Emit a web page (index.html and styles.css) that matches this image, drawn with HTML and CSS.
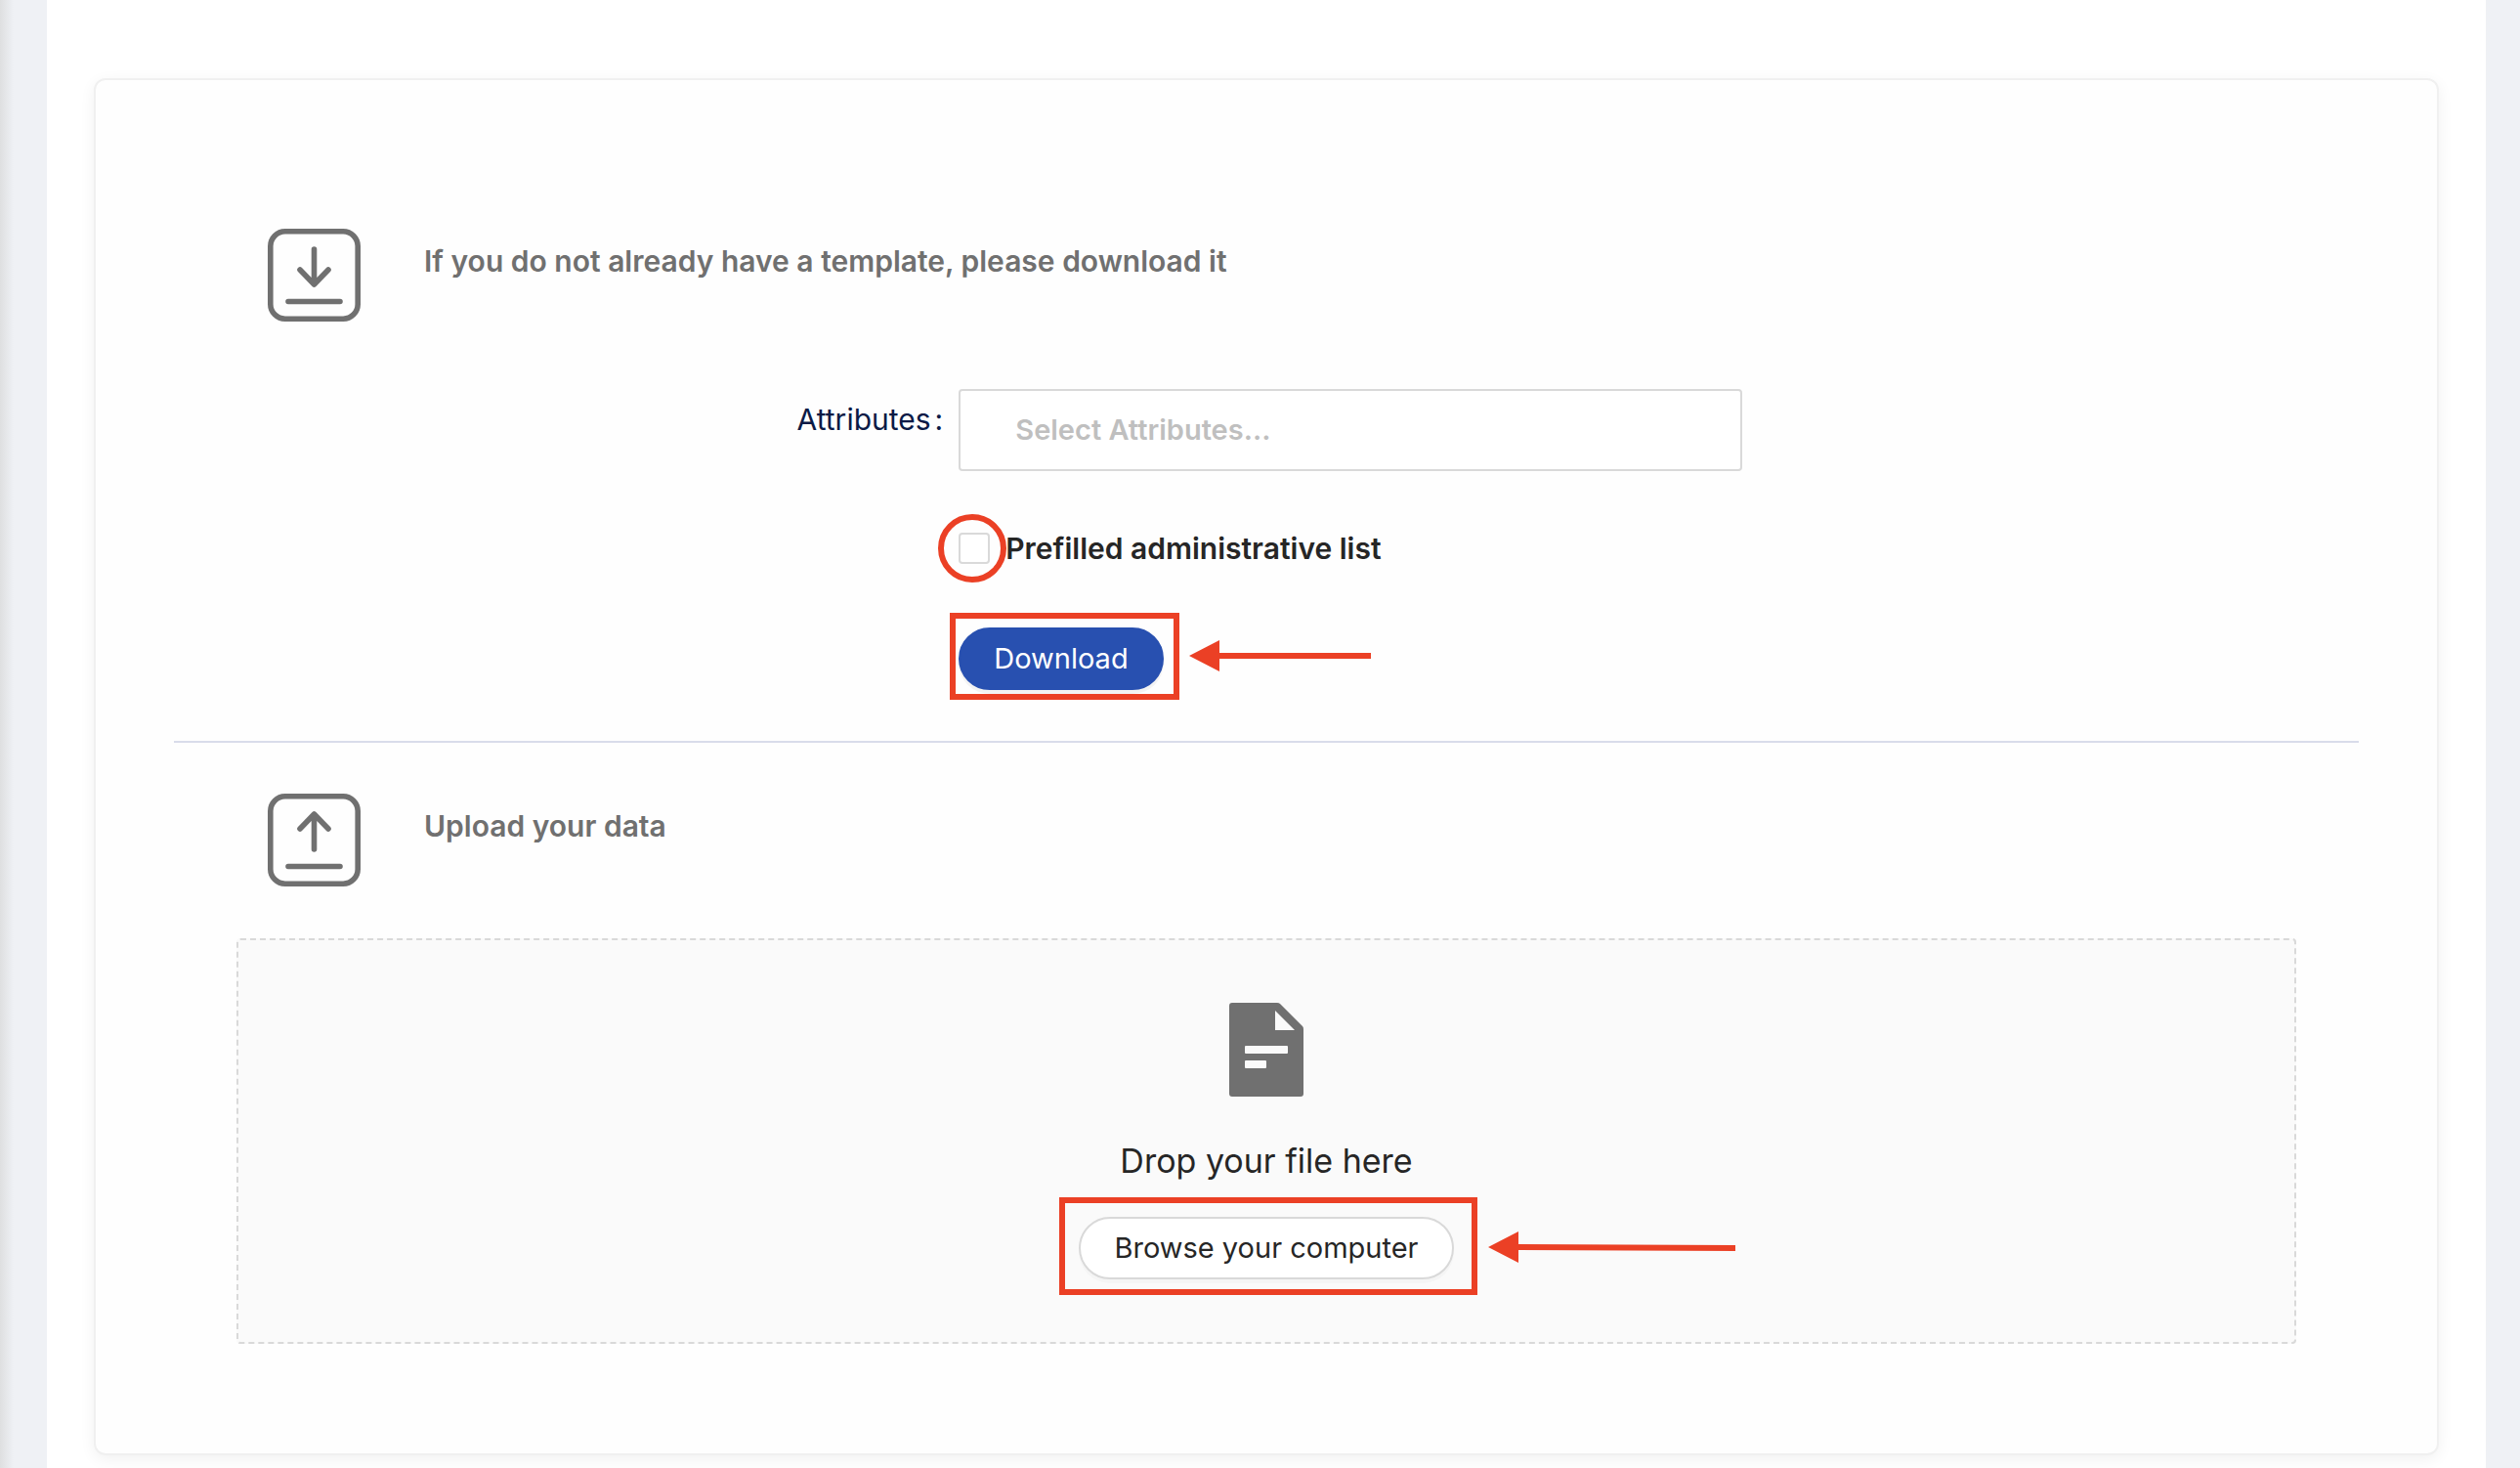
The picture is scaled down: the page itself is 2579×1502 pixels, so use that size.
FILE: index.html
```html
<!DOCTYPE html>
<html lang="en">
<head>
  <meta charset="UTF-8" />
  <meta name="viewport" content="width=device-width, initial-scale=1" />
  <title>Upload data</title>
  <link rel="stylesheet" href="styles.css">
</head>
<body>

<main class="page">
  <div class="card">

    <section class="section">
      <div class="section-head">
        <svg class="section-icon" viewBox="0 0 95 95" aria-hidden="true">
          <rect x="2.8" y="2.8" width="89.400" height="89.400" rx="15" />
          <path d="M47.5 21v36M33 42l14.5 15L62 42M21 74.500h53" />
        </svg>
        <h2>If you do not already have a template, please download it</h2>
      </div>

      <form class="template-form">
        <label class="field-label" for="attributes">Attributes<span class="colon">:</span></label>
        <input type="text" id="attributes" class="field-input" placeholder="Select Attributes..." />

        <div class="check-row">
          <span class="check-wrap">
            <input type="checkbox" id="prefilled" />
            <span class="ring"></span>
          </span>
          <label for="prefilled">Prefilled administrative list</label>
        </div>

        <div class="download-row">
          <span class="marked marked-download">
            <button type="button" class="btn btn-primary">Download</button>
            <svg class="arrow" viewBox="0 0 186 32" width="186" height="32" aria-hidden="true">
              <path d="M0 16L31 0v13h155v6H31v13z" />
            </svg>
          </span>
        </div>
      </form>
    </section>

    <hr />

    <section class="section">
      <div class="section-head">
        <svg class="section-icon" viewBox="0 0 95 95" aria-hidden="true">
          <rect x="2.8" y="2.8" width="89.400" height="89.400" rx="15" />
          <path d="M47.5 57V21M33 36l14.5-15L62 36M21 74.500h53" />
        </svg>
        <h2>Upload your data</h2>
      </div>

      <div class="dropzone">
        <svg class="file-icon" viewBox="0 0 76 96" aria-hidden="true">
          <path fill-rule="evenodd" d="M3 0h46q2 0 3 1l23 23q1 1 1 3v66q0 3-3 3H3q-3 0-3-3V3q0-3 3-3zM47 8v20h20zM17 44q-1 0-1 1v6q0 1 1 1h42q1 0 1-1v-6q0-1-1-1zM17 59q-1 0-1 1v6q0 1 1 1h20q1 0 1-1v-6q0-1-1-1z" />
        </svg>
        <p>Drop your file here</p>
        <span class="marked marked-browse">
          <button type="button" class="btn">Browse your computer</button>
          <svg class="arrow" viewBox="0 0 253 32" width="253" height="32" aria-hidden="true">
            <path d="M0 16L31 0v13l222 1v6L31 19v13z" />
          </svg>
        </span>
      </div>
    </section>

  </div>
</main>

</body>
</html>
```

FILE: styles.css
```css
* { box-sizing: border-box; }
body {
  margin: 0;
  padding: 0 35px 0 48px;
  font-family: Inter, 'Open Sans', sans-serif;
  font-size: 30px;
  color: #262626;
  background: linear-gradient(90deg, #dedfe0, #eff1f5 14px);
}
.page {
  min-height: 100vh;
  padding: 80px 48px 13px;
  background: #fff;
}
.card {
  padding: 152px 80px 112px;
  border: 2px solid #f0f0f0;
  border-radius: 12px;
  background: #fefefe;
  box-shadow: 0 4px 16px rgba(0, 0, 0, 0.06);
}
.section { padding: 0 64px; }

.section-head {
  display: flex;
  gap: 65px;
  padding-left: 32px;
}
.section-icon {
  width: 95px;
  height: 95px;
  fill: none;
  stroke: #707070;
  stroke-width: 5.6;
  stroke-linecap: round;
  stroke-linejoin: round;
}
h2 {
  margin: 0;
  font-size: 30px;
  font-weight: 600;
  line-height: 66px;
  color: #707070;
}

.template-form {
  display: grid;
  grid-template-columns: 35.07% 38.05%;
  margin-top: 69px;
}
.field-label {
  padding-right: 16px;
  line-height: 62px;
  text-align: right;
  color: #0b1a46;
}
.colon { margin-left: 4px; }
.field-input {
  height: 84px;
  padding: 0 56px 2px;
  border: 2px solid #d9d9d9;
  border-radius: 4px;
  font: inherit;
  font-size: 29px;
  font-weight: 600;
  background: #fff;
}
.field-input::placeholder { color: #bfbfbf; opacity: 1; }

.check-row, .download-row { grid-column: 2; }
.check-row {
  display: flex;
  align-items: center;
  gap: 16px;
  height: 64px;
  margin: 47px 0 49px;
  font-weight: 600;
}
.check-wrap {
  position: relative;
  display: flex;
}
.check-wrap input {
  appearance: none;
  width: 32px;
  height: 32px;
  margin: 0;
  border: 2px solid #d9d9d9;
  border-radius: 4px;
  background: #fff;
}
.check-wrap input:checked { background: #2850b0; }

.btn {
  display: block;
  height: 64px;
  padding: 0 34px 2px;
  border: 2px solid #d9d9d9;
  border-radius: 32px;
  font: inherit;
  font-size: 29px;
  color: #262626;
  background: #fff;
  box-shadow: 0 4px 0 rgba(0, 0, 0, 0.02);
  cursor: pointer;
}
.btn-primary {
  border-color: #2850b0;
  color: #fff;
  background: #2850b0;
  box-shadow: 0 4px 0 rgba(0, 0, 0, 0.045);
}

/* red callouts around the controls */
.ring {
  position: absolute;
  inset: -19px -17px -19px -21px;
  border: 6px solid #eb4025;
  border-radius: 50%;
  pointer-events: none;
}
.marked {
  position: relative;
  display: inline-block;
  vertical-align: top;
}
.marked::before {
  content: "";
  position: absolute;
  border: 6px solid #eb4025;
  pointer-events: none;
}
.marked-download::before { inset: -15px -16px -10px -9px; }
.marked-browse::before { inset: -20px -24px -16px -20px; }
.arrow {
  position: absolute;
  top: 13px;
  left: calc(100% + 26px);
  fill: #eb4025;
}
.marked-browse .arrow {
  top: 15px;
  left: calc(100% + 35px);
}

hr {
  height: 2px;
  margin: 52px 0;
  border: 0;
  background: #d9dcea;
}

.dropzone {
  margin-top: 53px;
  padding: 64px;
  border: 2px dashed #d9d9d9;
  border-radius: 4px;
  background: #fafafa;
  text-align: center;
}
.file-icon {
  display: block;
  width: 76px;
  height: 96px;
  margin: 0 auto;
  fill: #707070;
}
.dropzone p {
  margin: 42px 0 33px;
  font-size: 34px;
  line-height: 48px;
}
```
